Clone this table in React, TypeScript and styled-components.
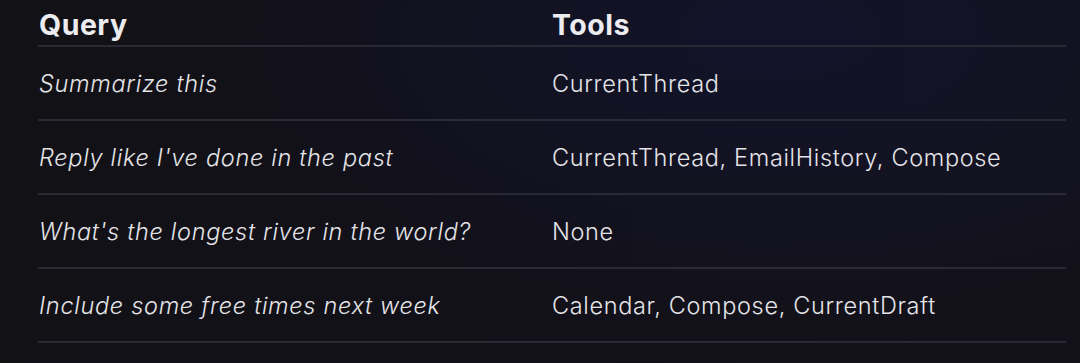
import React from "react";
import styled, { createGlobalStyle } from "styled-components";

type Row = {
  query: string;
  tools: string[];
};

const rows: Row[] = [
  { query: "Summarize this", tools: ["CurrentThread"] },
  { query: "Reply like I've done in the past", tools: ["CurrentThread", "EmailHistory", "Compose"] },
  { query: "What's the longest river in the world?", tools: [] },
  { query: "Include some free times next week", tools: ["Calendar", "Compose", "CurrentDraft"] },
];

const GlobalStyle = createGlobalStyle`
  html, body {
    margin: 0;
    padding: 0;
    background: #121117;
  }
  body {
    font-family: Inter, "Noto Sans", sans-serif;
  }
`;

const App: React.FC = () => {
  return (
    <Page>
      <GlobalStyle />
      <Table>
        <HeadRow>
          <HeadCell>Query</HeadCell>
          <HeadCell>Tools</HeadCell>
        </HeadRow>
        {rows.map((row) => (
          <BodyRow key={row.query}>
            <QueryCell>{row.query}</QueryCell>
            <ToolsCell>{row.tools.length ? row.tools.join(", ") : "None"}</ToolsCell>
          </BodyRow>
        ))}
      </Table>
    </Page>
  );
};

export default App;

const Page = styled.div`
  width: 1080px;
  height: 363px;
  box-sizing: border-box;
  padding: 0 14px 0 38px;
  overflow: hidden;
  background:
    radial-gradient(ellipse 55% 80% at 72% 10%, #12132a 0%, rgba(18, 19, 42, 0) 100%),
    linear-gradient(90deg, #121116 0%, #121119 50%, #13121a 100%);
`;

const Table = styled.div`
  display: flex;
  flex-direction: column;
`;

const Grid = styled.div`
  display: grid;
  grid-template-columns: 514px 1fr;
  align-items: center;
  border-bottom: 2px solid #2a2a34;
`;

const HeadRow = styled(Grid)`
  height: 45px;
  align-items: start;
  grid-template-columns: 513px 1fr;
`;

const BodyRow = styled(Grid)`
  height: 72px;
`;

const HeadCell = styled.div`
  padding: 7px 0 0 1px;
  font-size: 28.5px;
  font-weight: 700;
  color: #ececf0;
  letter-spacing: 0.5px;
`;

const QueryCell = styled.div`
  padding-left: 1px;
  font-size: 23.5px;
  font-weight: 300;
  font-style: italic;
  color: #e4e4e8;
  letter-spacing: 0.7px;
`;

const ToolsCell = styled.div`
  font-size: 23.5px;
  font-weight: 300;
  color: #e4e4e8;
  letter-spacing: 0.65px;
`;
